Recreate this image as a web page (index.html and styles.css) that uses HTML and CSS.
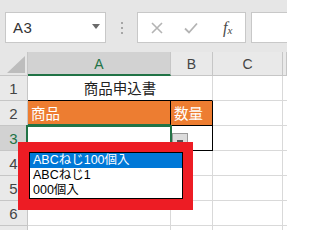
FILE: index.html
```html
<!DOCTYPE html>
<html lang="ja">
<head>
<meta charset="utf-8">
<link rel="stylesheet" href="styles.css">
</head>
<body>
<div class="app">
  <div class="toolbar">
    <div class="namebox">
      <span class="ref">A3</span>
      <svg class="nb-arrow" width="8" height="5" viewBox="0 0 8 5"><path d="M0 0 H8 L4 5 Z" fill="#6a6a6a"/></svg>
    </div>
    <div class="dots"><i></i><i></i><i></i></div>
    <div class="fxbox">
      <svg class="ico-x" width="12" height="12" viewBox="0 0 12 12"><path d="M1 1 L11 11 M11 1 L1 11" stroke="#b4b4b4" stroke-width="1.6" fill="none"/></svg>
      <svg class="ico-ok" width="14" height="12" viewBox="0 0 14 12"><path d="M1 6.5 L5 10.5 L13 1.5" stroke="#b4b4b4" stroke-width="1.8" fill="none"/></svg>
      <span class="fx">f<sub>x</sub></span>
    </div>
    <div class="valbox"></div>
  </div>

  <div class="sheet">
    <div class="corner"><span class="tri"></span></div>
    <div class="ch sel">A</div>
    <div class="ch">B</div>
    <div class="ch">C</div>
    <div class="ch last"></div>

    <div class="rh">1</div>
    <div class="c title">商品申込書</div>
    <div class="c"></div>
    <div class="c last"></div>

    <div class="rh">2</div>
    <div class="c hd hd-a">商品</div>
    <div class="c hd hd-b">数量</div>
    <div class="c"></div>
    <div class="c last"></div>

    <div class="rh sel">3</div>
    <div class="c a3"></div>
    <div class="c b3"><span class="ddbtn"><i></i></span></div>
    <div class="c"></div>
    <div class="c last"></div>

    <div class="rh">4</div>
    <div class="c"></div>
    <div class="c"></div>
    <div class="c"></div>
    <div class="c last"></div>

    <div class="rh">5</div>
    <div class="c"></div>
    <div class="c"></div>
    <div class="c"></div>
    <div class="c last"></div>

    <div class="rh">6</div>
    <div class="c"></div>
    <div class="c"></div>
    <div class="c"></div>
    <div class="c last"></div>

    <div class="rh"></div>
    <div class="c"></div>
    <div class="c"></div>
    <div class="c"></div>
    <div class="c last"></div>
  </div>

  <div class="callout">
    <ul class="list">
      <li class="on">ABCねじ100個入</li>
      <li>ABCねじ1</li>
      <li>000個入</li>
    </ul>
  </div>
</div>
</body>
</html>
```

FILE: styles.css
```css
* { box-sizing: border-box; }
html, body { margin: 0; padding: 0; }
body {
  width: 287px;
  height: 230px;
  overflow: hidden;
  background: #ffffff;
  font-family: "Liberation Sans", "Noto Sans CJK JP", sans-serif;
}
.app {
  position: relative;
  width: 287px;
  height: 230px;
  overflow: hidden;
}

/* formula bar */
.toolbar {
  display: flex;
  align-items: stretch;
  height: 52px;
  padding: 12px 0 9px 5px;
  background: #e6e6e6;
}
.namebox {
  width: 101px;
  background: #fff;
  border: 1px solid #c8c8c8;
  display: flex;
  align-items: center;
  justify-content: space-between;
  padding: 0 5px 0 7px;
}
.ref {
  font-size: 15px;
  color: #333;
  letter-spacing: 0.5px;
}
.nb-arrow { margin-bottom: 2px; }
.dots {
  width: 31px;
  display: flex;
  flex-direction: column;
  align-items: center;
  justify-content: center;
  gap: 3px;
}
.dots i {
  display: block;
  width: 2px;
  height: 2px;
  background: #a6a6a6;
}
.fxbox {
  width: 109px;
  background: #fff;
  border: 1px solid #c8c8c8;
  display: flex;
  align-items: center;
  padding-left: 13px;
}
.ico-x { margin-right: 21px; }
.ico-ok { margin-right: 25px; margin-top: 1px; }
.fx {
  font-family: "Liberation Serif", serif;
  font-style: italic;
  font-size: 16px;
  color: #4a4a4a;
  line-height: 1;
}
.fx sub {
  font-size: 11px;
  vertical-align: 0;
  position: relative;
  top: 1px;
}
.valbox {
  flex: 1;
  margin-left: 5px;
  background: #fff;
  border: 1px solid #c8c8c8;
  border-right: 0;
}

/* sheet grid */
.sheet {
  display: grid;
  grid-template-columns: 28px 143px 42px 70px 1fr;
  grid-template-rows: 24px repeat(7, 25px);
  background: #fff;
}
.corner {
  position: relative;
  background: #e6e6e6;
  border-right: 1px solid #c6c6c6;
  border-bottom: 1px solid #c6c6c6;
}
.tri {
  position: absolute;
  right: 2px;
  bottom: 2px;
  width: 0;
  height: 0;
  border-left: 18px solid transparent;
  border-bottom: 17px solid #bdbdbd;
}
.ch {
  background: #e9e9e9;
  border-right: 1px solid #c6c6c6;
  border-bottom: 1px solid #c6c6c6;
  font-size: 14px;
  color: #444;
  display: flex;
  align-items: center;
  justify-content: center;
  padding-top: 1px;
}
.ch.sel {
  background: #d2d2d2;
  color: #217346;
  border-bottom: 2px solid #217346;
}
.rh {
  background: #e9e9e9;
  border-right: 1px solid #c6c6c6;
  border-bottom: 1px solid #c6c6c6;
  font-size: 15px;
  color: #444;
  display: flex;
  align-items: center;
  justify-content: center;
}
.rh.sel {
  background: #d2d2d2;
  color: #217346;
}
.c {
  position: relative;
  border-right: 1px solid #d9d9d9;
  border-bottom: 1px solid #d9d9d9;
  font-family: "Noto Sans CJK JP", sans-serif;
  font-size: 14.5px;
  color: #222;
  display: flex;
  align-items: center;
  line-height: 1;
}
.c.last { border-right: 0; }
.title {
  grid-column: span 2;
  justify-content: center;
  border-bottom: 1px solid #000;
}
.hd {
  background: #ed7d31;
  color: #fff;
  padding-left: 3px;
  padding-top: 1px;
}
.hd-a {
  border-right: 1px solid #000;
  border-bottom: 2px solid #217346;
}
.hd-b {
  border-right: 1px solid #000;
  border-bottom: 1px solid #000;
}
.a3 {
  outline: 2px solid #217346;
  outline-offset: -1px;
  margin-left: -1px;
}
.b3 {
  border-right: 1px solid #000;
  border-bottom: 1px solid #000;
}
.ddbtn {
  position: absolute;
  left: 1px;
  top: 7px;
  width: 16px;
  height: 16px;
  background: #dcdcdc;
  border: 1px solid #9a9a9a;
}
.ddbtn i {
  position: absolute;
  left: 4px;
  top: 6px;
  width: 6px;
  height: 3px;
  background: #555;
}

/* red callout with list */
.callout {
  position: absolute;
  left: 18px;
  top: 142px;
  width: 175px;
  height: 68px;
  background: #ed1c24;
  padding: 10px 10px 11px 11px;
}
.list {
  margin: 0;
  padding: 0;
  list-style: none;
  height: 100%;
  background: #fff;
  border: 1px solid #000;
}
.list li {
  height: 15px;
  line-height: 15px;
  padding-left: 3px;
  font-family: "Liberation Sans", "Noto Sans CJK JP", sans-serif;
  font-size: 12.5px;
  color: #000;
  white-space: nowrap;
}
.list li.on {
  background: #0078d7;
  color: #fff;
}
```
